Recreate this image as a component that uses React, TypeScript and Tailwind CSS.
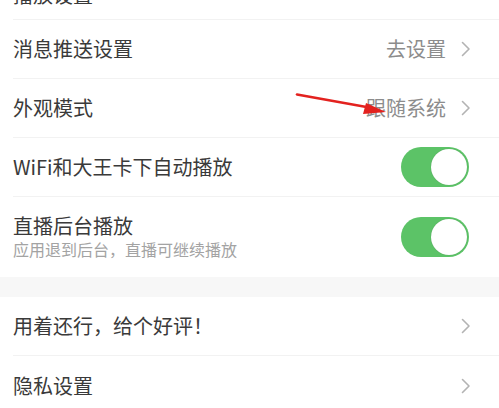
import React from "react";

const font = { fontFamily: '"Noto Sans CJK SC", "Noto Sans", sans-serif' };

function Chevron() {
  return (
    <svg width="10" height="16" viewBox="0 0 10 16" className="ml-[15px] shrink-0">
      <path d="M1.5 1.5 L8 8 L1.5 14.5" fill="none" stroke="#b3b3b3" strokeWidth="1.6" strokeLinecap="round" strokeLinejoin="round" />
    </svg>
  );
}

function Toggle() {
  return (
    <div className="relative w-[68px] h-[40px] mr-[2px] rounded-full bg-[#5cc367] shrink-0">
      <div className="absolute right-[2px] top-[2px] w-[36px] h-[36px] rounded-full bg-white shadow-[0_0_1px_rgba(0,0,0,0.25)]" />
    </div>
  );
}

function Row({ children, last = false, h = "h-[59px]" }: { children: React.ReactNode; last?: boolean; h?: string }) {
  return (
    <div className="pl-[13px] bg-white">
      <div className={`flex items-center ${h} pr-[28px] ${last ? "" : "border-b border-[#f2f2f2]"}`}>{children}</div>
    </div>
  );
}

export default function App() {
  return (
    <div className="relative w-[499px] h-[408px] overflow-hidden bg-white" style={font}>
      <div className="pl-[13px]">
        <div className="h-[20px] overflow-hidden flex items-end border-b border-[#f2f2f2]">
          <span className="text-[20px] leading-[20px] mb-[14px] text-[#3a3a3a]">播放设置</span>
        </div>
      </div>
      <Row>
        <span className="text-[20px] text-[#3a3a3a] flex-1">消息推送设置</span>
        <span className="text-[20px] text-[#8c8c8c]">去设置</span>
        <Chevron />
      </Row>
      <Row>
        <span className="text-[20px] text-[#3a3a3a] flex-1">外观模式</span>
        <span className="text-[20px] text-[#8c8c8c]">跟随系统</span>
        <Chevron />
      </Row>
      <Row>
        <span className="text-[20px] text-[#3a3a3a] flex-1">WiFi和大王卡下自动播放</span>
        <Toggle />
      </Row>
      <Row last h="h-[80px]">
        <div className="flex flex-col flex-1">
          <span className="text-[20px] leading-[24px] text-[#3a3a3a]">直播后台播放</span>
          <span className="text-[16px] leading-[22px] text-[#a3a3a3]">应用退到后台，直播可继续播放</span>
        </div>
        <Toggle />
      </Row>
      <div className="h-[20px] bg-[#f7f7f7]" />
      <Row>
        <span className="text-[20px] text-[#3a3a3a] flex-1">用着还行，给个好评！</span>
        <Chevron />
      </Row>
      <Row last>
        <span className="text-[20px] text-[#3a3a3a] flex-1">隐私设置</span>
        <Chevron />
      </Row>
      <svg className="absolute left-0 top-0 pointer-events-none" width="499" height="408">
        <line x1="297" y1="94.5" x2="372" y2="108" stroke="#e3221f" strokeWidth="2.4" strokeLinecap="round" />
        <polygon points="386,112 366,103 363,114" fill="#e3221f" />
      </svg>
    </div>
  );
}
